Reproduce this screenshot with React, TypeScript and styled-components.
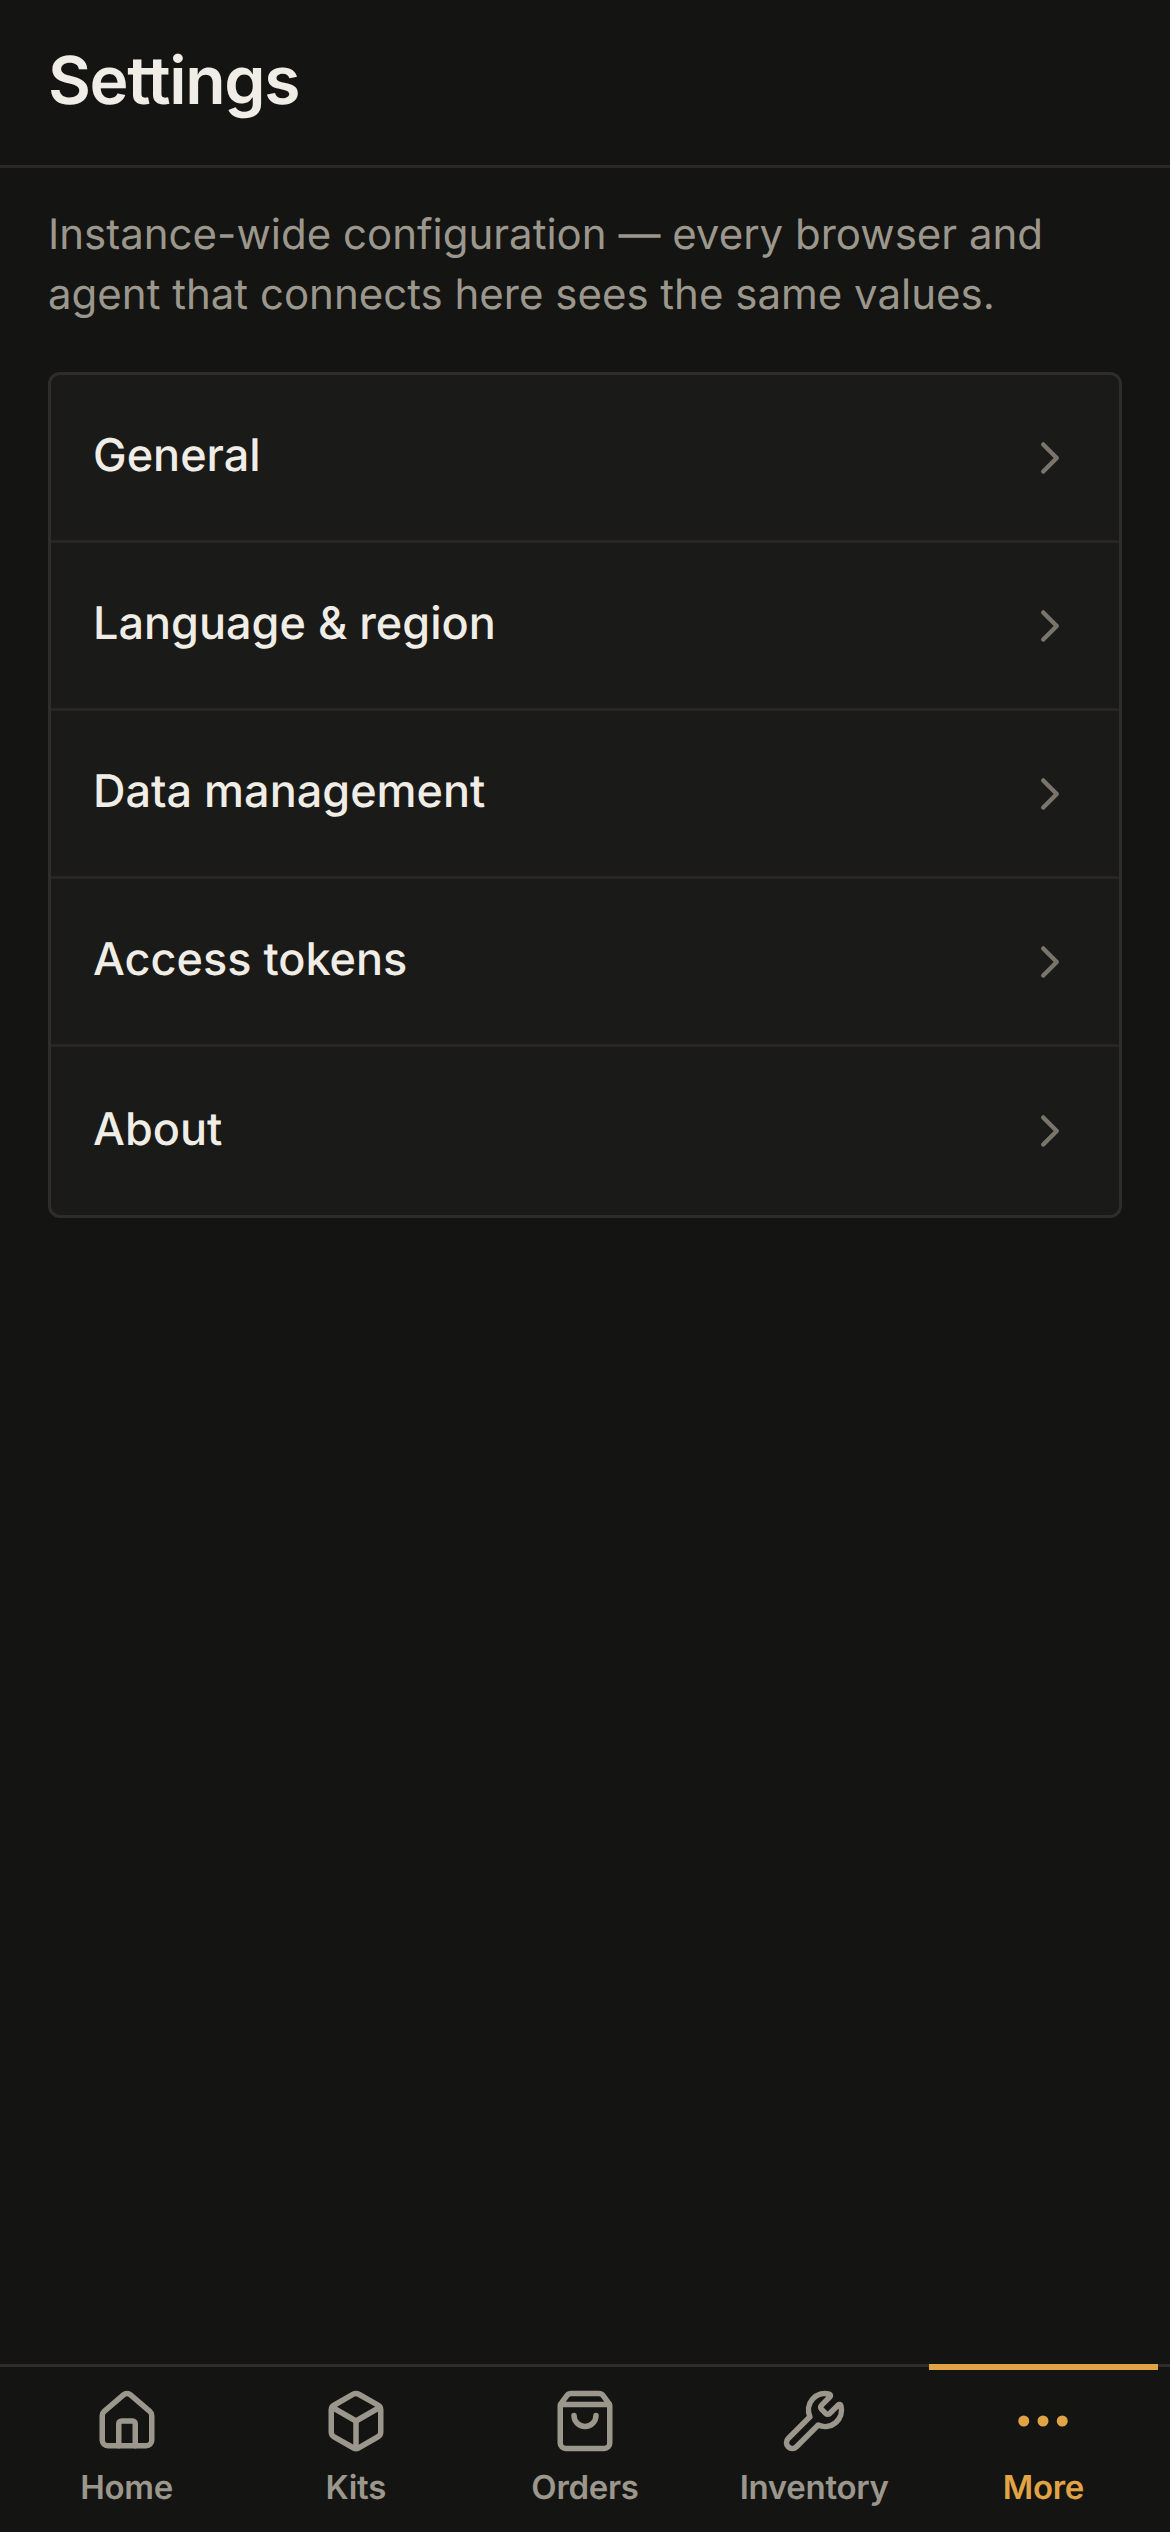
import React from 'react'
import styled, { createGlobalStyle } from 'styled-components'
import { Box, ChevronRight, Ellipsis, House, ShoppingBag, Wrench } from 'lucide-react'

const GlobalStyle = createGlobalStyle`
  * {
    box-sizing: border-box;
  }

  html,
  body {
    margin: 0;
    padding: 0;
    background: #141413;
  }

  body {
    font-family: Inter, 'Noto Sans', sans-serif;
    text-rendering: geometricPrecision;
  }
`

const Page = styled.div`
  width: 1170px;
  height: 2532px;
  display: flex;
  flex-direction: column;
  background: #141413;
  color: #f0ede6;
`

const Header = styled.header`
  height: 168px;
  padding: 0 48px 6px;
  display: flex;
  align-items: center;
  border-bottom: 3px solid #2a2927;
`

const Title = styled.h1`
  margin: 0;
  font-size: 66px;
  font-weight: 600;
  line-height: 1;
  letter-spacing: -1.32px;
`

const Main = styled.main`
  flex: 1;
  padding: 37px 48px;
`

const Intro = styled.p`
  margin: 0 0 47px;
  font-size: 42px;
  line-height: 60px;
  color: #9c978c;
`

const Card = styled.ul`
  margin: 0;
  padding: 0;
  list-style: none;
  background: #1a1a18;
  border: 3px solid #2e2d2a;
  border-radius: 12px;
  overflow: hidden;
`

const Row = styled.li`
  height: 168px;
  padding: 0 42px;
  display: flex;
  align-items: center;
  justify-content: space-between;
  border-bottom: 3px solid #272624;

  &:last-child {
    border-bottom: 0;
  }

  svg {
    color: #7a756b;
  }
`

const RowLabel = styled.span`
  margin-bottom: 6px;
  font-size: 45px;
  font-weight: 500;
`

const TabBar = styled.nav`
  height: 168px;
  padding: 0 12px;
  display: grid;
  grid-template-columns: repeat(5, 1fr);
  border-top: 3px solid #2e2d2a;
`

const Tab = styled.a<{ $active?: boolean }>`
  position: relative;
  padding-top: 21px;
  display: flex;
  flex-direction: column;
  align-items: center;
  gap: 13px;
  font-size: 33px;
  font-weight: 600;
  letter-spacing: -0.3px;
  color: ${props => (props.$active ? '#e0a345' : '#9c978c')};

  ${props =>
    props.$active &&
    `
    &::before {
      content: '';
      position: absolute;
      top: -3px;
      left: 0;
      right: 0;
      height: 6px;
      background: #e0a345;
    }
  `}
`

const settings = ['General', 'Language & region', 'Data management', 'Access tokens', 'About']

const tabs = [
  { label: 'Home', Icon: House },
  { label: 'Kits', Icon: Box },
  { label: 'Orders', Icon: ShoppingBag },
  { label: 'Inventory', Icon: Wrench },
  { label: 'More', Icon: Ellipsis, active: true },
]

const App = () => (
  <Page>
    <GlobalStyle />
    <Header>
      <Title>Settings</Title>
    </Header>
    <Main>
      <Intro>Instance-wide configuration — every browser and agent that connects here sees the same values.</Intro>
      <Card>
        {settings.map(name => (
          <Row key={name}>
            <RowLabel>{name}</RowLabel>
            <ChevronRight size={54} strokeWidth={2} />
          </Row>
        ))}
      </Card>
    </Main>
    <TabBar>
      {tabs.map(({ label, Icon, active }) => (
        <Tab key={label} $active={active}>
          <Icon size={66} strokeWidth={2} />
          {label}
        </Tab>
      ))}
    </TabBar>
  </Page>
)

export default App
